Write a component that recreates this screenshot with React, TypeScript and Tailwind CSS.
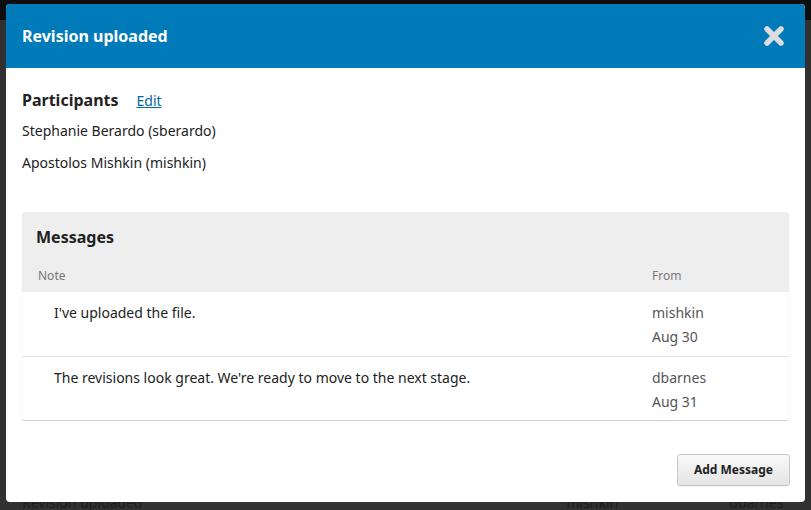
import React from "react";

interface Message {
  note: string;
  from: string;
  date: string;
}

const messages: Message[] = [
  { note: "I've uploaded the file.", from: "mishkin", date: "Aug 30" },
  {
    note: "The revisions look great. We're ready to move to the next stage.",
    from: "dbarnes",
    date: "Aug 31",
  },
];

const participants = [
  "Stephanie Berardo (sberardo)",
  "Apostolos Mishkin (mishkin)",
];

const CloseIcon = () => (
  <svg width="22" height="22" viewBox="0 0 22 22">
    <path
      d="M4 4 L18 18 M18 4 L4 18"
      stroke="#dddddd"
      strokeWidth="5.5"
      strokeLinecap="round"
    />
  </svg>
);

const App: React.FC = () => {
  return (
    <div
      className="relative w-[811px] h-[510px] overflow-hidden bg-[#313131] text-[#222]"
      style={{ fontFamily: '"Noto Sans", "Open Sans", sans-serif' }}
    >
      {/* dimmed page behind the modal */}
      <div className="flex flex-col h-full">
        <div className="h-[20px] bg-[#0c0d0e] flex justify-end items-start pr-2 text-[13px] font-bold text-[#3a3a3a]">
          <span className="mr-3">◌</span>
          <span>English</span>
        </div>
        <div className="flex-1" />
        <div className="h-[16px] flex items-end text-[14px] text-[#1c1c1c] leading-none">
          <span className="ml-[22px]">Revision uploaded</span>
          <span className="ml-[424px]">mishkin</span>
          <span className="ml-[111px]">dbarnes</span>
        </div>
      </div>

      {/* modal */}
      <div className="absolute left-[6px] top-[4px] w-[799px] h-[498px] bg-white rounded-[4px] overflow-hidden flex flex-col">
        <div className="h-[64px] bg-[#007ab8] flex items-center justify-between pl-4 pr-[20px]">
          <h1 className="text-white font-bold text-[16px]">
            Revision uploaded
          </h1>
          <CloseIcon />
        </div>

        <div className="flex flex-col px-4 pt-[21px] flex-1">
          <div className="flex items-center gap-[18px] h-[22px]">
            <h2 className="font-bold text-[16px] text-[#222]">Participants</h2>
            <a className="text-[14px] text-[#006798] underline">Edit</a>
          </div>
          <div className="flex flex-col gap-[13px] mt-[10px] text-[14px] text-[#222]">
            {participants.map((p) => (
              <div key={p} className="h-[19px] leading-[19px]">
                {p}
              </div>
            ))}
          </div>

          <div className="mt-[40px] bg-[#eeeeee] rounded-[3px] shadow-[0_1px_1px_rgba(0,0,0,0.2)] overflow-hidden">
            <div className="h-[48px] flex items-center px-[14px] pt-[2px]">
              <h3 className="font-bold text-[16px] text-[#222]">Messages</h3>
            </div>
            <div className="h-[32px] flex items-center text-[12px] text-[#777] pb-[1px]">
              <span className="ml-[16px] flex-1">Note</span>
              <span className="w-[137px]">From</span>
            </div>
            {messages.map((m, i) => (
              <div
                key={i}
                className={`bg-white h-[64px] flex text-[14px] ${
                  i > 0 ? "border-t border-[#e5e5e5]" : ""
                }`}
              >
                <div className="flex-1 pl-[32px] pt-[11px] leading-[20px] text-[#222]">
                  {m.note}
                </div>
                <div className="w-[137px] pt-[11px] leading-[20px] text-[#555] flex flex-col gap-[4px]">
                  <span>{m.from}</span>
                  <span>{m.date}</span>
                </div>
              </div>
            ))}
          </div>

          <div className="flex justify-end mt-[34px] -mr-[1px]">
            <button className="h-[32px] px-[16px] rounded-[3px] border border-[#c8c8c8] bg-gradient-to-b from-[#f9f9f9] to-[#e4e4e4] text-[12px] font-bold text-[#222] shadow-[0_1px_0_rgba(0,0,0,0.05)]">
              Add Message
            </button>
          </div>
        </div>
      </div>
    </div>
  );
};

export default App;
